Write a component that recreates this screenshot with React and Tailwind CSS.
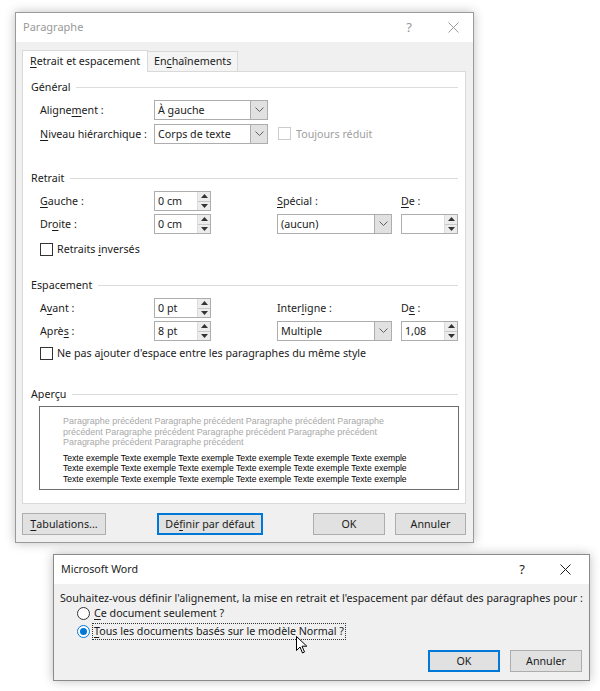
import React from "react";

const font = { fontFamily: '"Noto Sans", "Open Sans", sans-serif' };

const U = ({ children }) => <span className="underline underline-offset-2">{children}</span>;

const Chevron = () => (
  <svg width="9" height="6" viewBox="0 0 9 6" fill="none">
    <path d="M0.5 0.5l4 4 4-4" stroke="#606060" strokeWidth="1" />
  </svg>
);

const Select = ({ value, w = "w-[114px]" }) => (
  <div className={`${w} h-[20px] flex border border-[#adadad] bg-white`}>
    <div className="flex-1 flex items-center pl-[3px] text-[#1b1b1b]">{value}</div>
    <div className="w-[17px] flex items-center justify-center bg-[#e1e1e1] border-l border-[#adadad]">
      <Chevron />
    </div>
  </div>
);

const Spinner = ({ value }) => (
  <div className="w-[57px] h-[20px] flex border border-[#adadad] bg-white">
    <div className="flex-1 flex items-center pl-[3px] text-[#1b1b1b]">{value}</div>
    <div className="w-[13px] flex flex-col border-l border-[#dcdcdc] bg-[#ececec]">
      <div className="flex-1 flex items-center justify-center border-b border-[#c8c8c8]">
        <svg width="7" height="4" viewBox="0 0 7 4"><path d="M0 4L3.5 0L7 4Z" fill="#333" /></svg>
      </div>
      <div className="flex-1 flex items-center justify-center">
        <svg width="7" height="4" viewBox="0 0 7 4"><path d="M0 0L3.5 4L7 0Z" fill="#333" /></svg>
      </div>
    </div>
  </div>
);

const Checkbox = ({ disabled }) => (
  <div className={`w-[13px] h-[13px] shrink-0 bg-white border ${disabled ? "border-[#cccccc]" : "border-[#333333]"}`} />
);

const Group = ({ label, children }) => (
  <div>
    <div className="flex items-center h-[16px] pr-[7px]">
      <span className="text-[#1b1b1b]">{label}</span>
      <div className="flex-1 h-px bg-[#dcdcdc] ml-[6px] mt-[1px]" />
    </div>
    {children}
  </div>
);

const Button = ({ children, primary, w }) => (
  <div
    className={`${w} h-[22px] flex items-center justify-center text-[#1b1b1b] bg-[#e1e1e1] ${
      primary ? "border-2 border-[#0078d7]" : "border border-[#adadad]"
    }`}
  >
    {children}
  </div>
);

const Cursor = () => (
  <svg className="absolute left-[296px] top-[636px]" width="12" height="18" viewBox="0 0 12 18">
    <path d="M0.5 0.5 L0.5 14.5 L4 11 L6.5 17 L8.5 16 L6 10.2 L10.8 10.2 Z" fill="white" stroke="black" strokeWidth="1" />
  </svg>
);

const gray = "Paragraphe précédent Paragraphe précédent Paragraphe précédent Paragraphe";
const gray2 = "précédent Paragraphe précédent Paragraphe précédent Paragraphe précédent";
const gray3 = "Paragraphe précédent Paragraphe précédent";
const sample = "Texte exemple Texte exemple Texte exemple Texte exemple Texte exemple Texte exemple";

export default function App() {
  return (
    <div className="relative w-[600px] h-[691px] bg-white pt-[12px] pl-[15px] overflow-hidden whitespace-nowrap" style={font}>
      {/* Paragraphe dialog */}
      <div className="w-[459px] h-[531px] flex flex-col border border-[#9a9a9a] shadow-[0_0_10px_rgba(0,0,0,0.25)] text-[10.7px]">
        <div className="h-[29px] bg-white flex items-center pl-[7px] pr-[14px] shrink-0">
          <span className="text-[11px] text-[#999999]">Paragraphe</span>
          <span className="ml-auto text-[13px] text-[#999999] mr-[36px]">?</span>
          <svg width="11" height="11" viewBox="0 0 11 11">
            <path d="M0.5 0.5l10 10M10.5 0.5l-10 10" stroke="#999" strokeWidth="1" />
          </svg>
        </div>
        <div className="flex-1 bg-[#f0f0f0] pl-[6px] pr-[7px] pt-[7px] flex flex-col">
          {/* Tabs */}
          <div className="flex items-end h-[22px] text-[#1b1b1b]">
            <div className="h-[22px] w-[126px] bg-white border border-b-0 border-[#d9d9d9] flex items-center pl-[7px] relative z-10 -mb-px">
              <span><U>R</U>etrait et espacement</span>
            </div>
            <div className="h-[20px] w-[90px] bg-[#f4f4f4] border border-l-0 border-b-0 border-[#d9d9d9] flex items-center pl-[6px]">
              <span>En<U>c</U>haînements</span>
            </div>
          </div>
          {/* Panel */}
          <div className="h-[433px] bg-white border border-[#d9d9d9] pl-[8px] pt-[7px] text-[#1b1b1b]">
            <Group label="Général">
              <div className="ml-[9px] mt-[5px] flex flex-col gap-[4px]">
                <div className="flex items-center">
                  <span className="w-[114px]">Aligne<U>m</U>ent :</span>
                  <Select value="À gauche" />
                </div>
                <div className="flex items-center">
                  <span className="w-[114px]"><U>N</U>iveau hiérarchique :</span>
                  <Select value="Corps de texte" />
                  <div className="ml-[10px] flex items-center gap-[5px] text-[#a0a0a0]">
                    <Checkbox disabled />
                    <span>Toujours réduit</span>
                  </div>
                </div>
              </div>
            </Group>

            <div className="mt-[26px]">
              <Group label="Retrait">
                <div className="ml-[9px] mt-[5px] grid grid-cols-[114px_123px_124px_57px] grid-rows-[20px_20px] gap-y-[3px] items-center">
                  <span><U>G</U>auche :</span>
                  <Spinner value="0 cm" />
                  <span><U>S</U>pécial :</span>
                  <span><U>D</U>e :</span>
                  <span>Dr<U>o</U>ite :</span>
                  <Spinner value="0 cm" />
                  <Select value="(aucun)" w="w-[115px]" />
                  <Spinner value="" />
                </div>
                <div className="ml-[9px] mt-[7px] flex items-center gap-[4px] h-[16px]">
                  <Checkbox />
                  <span>Retraits <U>i</U>nversés</span>
                </div>
              </Group>
            </div>

            <div className="mt-[20px]">
              <Group label="Espacement">
                <div className="ml-[9px] mt-[5px] grid grid-cols-[114px_123px_124px_57px] grid-rows-[20px_20px] gap-y-[3px] items-center">
                  <span>A<U>v</U>ant :</span>
                  <Spinner value="0 pt" />
                  <span>Inter<U>l</U>igne :</span>
                  <span>D<U>e</U> :</span>
                  <span>Aprè<U>s</U> :</span>
                  <Spinner value="8 pt" />
                  <Select value="Multiple" w="w-[115px]" />
                  <Spinner value="1,08" />
                </div>
                <div className="ml-[9px] mt-[4px] flex items-center gap-[4px] h-[16px]">
                  <Checkbox />
                  <span>Ne pas a<U>j</U>outer d'espace entre les paragraphes du même style</span>
                </div>
              </Group>
            </div>

            <div className="mt-[25px]">
              <Group label="Aperçu">
                <div
                  className="ml-[8px] mt-[4px] w-[420px] h-[84px] border border-[#6d6d6d] pl-[23px] pt-[9px] leading-[10.5px]"
                  style={{ fontFamily: '"Liberation Sans", Arial, sans-serif' }}
                >
                  <div className="text-[#a8a8a8] text-[8.95px]">
                    <div>{gray}</div>
                    <div>{gray2}</div>
                    <div>{gray3}</div>
                  </div>
                  <div className="text-black text-[8.6px] mt-[5px]">
                    <div>{sample}</div>
                    <div>{sample}</div>
                    <div>{sample}</div>
                  </div>
                </div>
              </Group>
            </div>
          </div>
          {/* Buttons */}
          <div className="flex items-center mt-[9px]">
            <Button w="w-[84px]"><U>T</U>abulations...</Button>
            <div className="ml-[51px]">
              <Button w="w-[106px]" primary>Dé<U>f</U>inir par défaut</Button>
            </div>
            <div className="ml-[50px]">
              <Button w="w-[72px]">OK</Button>
            </div>
            <div className="ml-[10px]">
              <Button w="w-[71px]">Annuler</Button>
            </div>
          </div>
        </div>
      </div>

      {/* Microsoft Word dialog */}
      <div className="ml-[38px] mt-[11px] w-[537px] h-[127px] flex flex-col border border-[#8a8a8a] shadow-[0_0_10px_rgba(0,0,0,0.25)] text-[10.7px]">
        <div className="h-[29px] bg-white flex items-center pl-[7px] pr-[18px] shrink-0">
          <span className="text-[#1b1b1b]">Microsoft Word</span>
          <span className="ml-auto text-[13px] text-[#1b1b1b] mr-[35px]">?</span>
          <svg width="11" height="11" viewBox="0 0 11 11">
            <path d="M0.5 0.5l10 10M10.5 0.5l-10 10" stroke="#1b1b1b" strokeWidth="1" />
          </svg>
        </div>
        <div className="flex-1 bg-[#f0f0f0] pl-[6px] pt-[6px] text-[#1b1b1b]">
          <div className="h-[16px] flex items-center">
            Souhaitez-vous définir l'alignement, la mise en retrait et l'espacement par défaut des paragraphes pour :
          </div>
          <div className="ml-[17px] -mt-[2px] flex items-center gap-[3px] h-[18px]">
            <div className="w-[13px] h-[13px] rounded-full border border-[#333] bg-white" />
            <span className="px-[1px]"><U>C</U>e document seulement ?</span>
          </div>
          <div className="ml-[17px] flex items-center gap-[2px] h-[18px]">
            <div className="w-[13px] h-[13px] rounded-full border border-[#0078d7] bg-white flex items-center justify-center">
              <div className="w-[7px] h-[7px] rounded-full bg-[#0078d7]" />
            </div>
            <span className="px-[1px] border border-dotted border-[#333] leading-[15px]"><U>T</U>ous les documents basés sur le modèle Normal ?</span>
          </div>
          <div className="flex justify-end pr-[7px] mt-[10px]">
            <Button w="w-[72px]" primary>OK</Button>
            <div className="ml-[10px]">
              <Button w="w-[72px]">Annuler</Button>
            </div>
          </div>
        </div>
      </div>
      <Cursor />
    </div>
  );
}
